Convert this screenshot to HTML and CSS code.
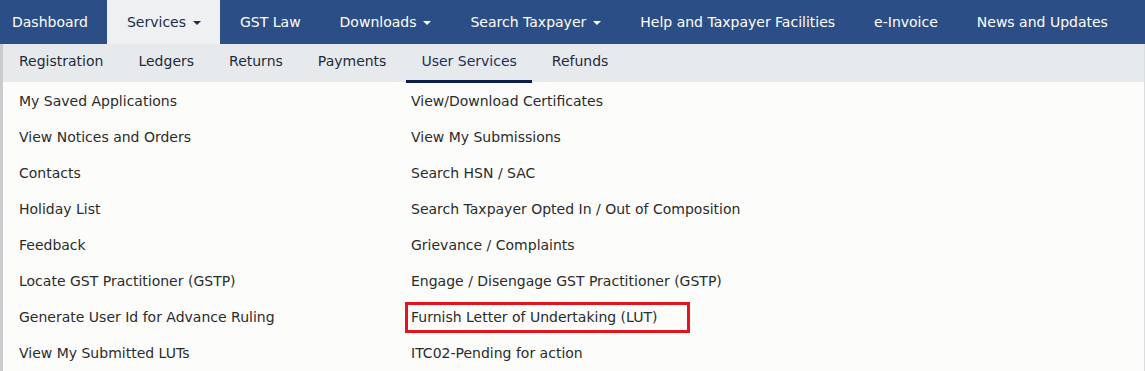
FILE: index.html
```html
<!DOCTYPE html>
<html lang="en">
<head>
    <meta charset="UTF-8">
    <meta name="viewport" content="width=device-width, initial-scale=1.0">
    <title>Services - User Services</title>
    <link rel="stylesheet" href="styles.css">
</head>
<body>

    <nav class="topnav">
        <a class="topnav-item first" href="#">Dashboard</a>
        <a class="topnav-item active" href="#">Services <span class="caret"></span></a>
        <a class="topnav-item" href="#">GST Law</a>
        <a class="topnav-item" href="#">Downloads <span class="caret"></span></a>
        <a class="topnav-item" href="#">Search Taxpayer <span class="caret"></span></a>
        <a class="topnav-item" href="#">Help and Taxpayer Facilities</a>
        <a class="topnav-item" href="#">e-Invoice</a>
        <a class="topnav-item" href="#">News and Updates</a>
    </nav>

    <div class="panel">
        <nav class="subnav">
            <a class="subnav-item" href="#">Registration</a>
            <a class="subnav-item" href="#">Ledgers</a>
            <a class="subnav-item" href="#">Returns</a>
            <a class="subnav-item" href="#">Payments</a>
            <a class="subnav-item current" href="#">User Services</a>
            <a class="subnav-item" href="#">Refunds</a>
        </nav>

        <ul class="menu">
            <li><a href="#">My Saved Applications</a></li>
            <li><a href="#">View/Download Certificates</a></li>
            <li><a href="#">View Notices and Orders</a></li>
            <li><a href="#">View My Submissions</a></li>
            <li><a href="#">Contacts</a></li>
            <li><a href="#">Search HSN / SAC</a></li>
            <li><a href="#">Holiday List</a></li>
            <li><a href="#">Search Taxpayer Opted In / Out of Composition</a></li>
            <li><a href="#">Feedback</a></li>
            <li><a href="#">Grievance / Complaints</a></li>
            <li><a href="#">Locate GST Practitioner (GSTP)</a></li>
            <li><a href="#">Engage / Disengage GST Practitioner (GSTP)</a></li>
            <li><a href="#">Generate User Id for Advance Ruling</a></li>
            <li><a class="highlight" href="#">Furnish Letter of Undertaking (LUT)</a></li>
            <li><a href="#">View My Submitted LUTs</a></li>
            <li><a href="#">ITC02-Pending for action</a></li>
        </ul>
    </div>

</body>
</html>
```

FILE: styles.css
```css
body {
    margin: 0;
    padding: 0;
    font-family: 'DejaVu Sans', Verdana, sans-serif;
    font-size: 14px;
    background-color: #fcfcfb;
    overflow: hidden;
}
a {
    text-decoration: none;
}

/* top bar */
.topnav {
    display: flex;
    height: 44px;
    background-color: #2c4e86;
}
.topnav-item {
    display: flex;
    align-items: center;
    gap: 7px;
    padding: 0 19px 0 20px;
    color: #ffffff;
    white-space: nowrap;
}
.topnav-item.first {
    padding-left: 12px;
}
.topnav-item.active {
    background-color: #eef0f2;
    color: #1d2c4c;
}
.caret {
    width: 0;
    height: 0;
    border-left: 4px solid transparent;
    border-right: 4px solid transparent;
    border-top: 4px solid currentColor;
    margin-top: 2px;
}

/* dropdown panel */
.panel {
    border-left: 3px solid #c9cbcd;
    border-right: 1px solid #dcdcdc;
    min-height: 330px;
}
.subnav {
    display: flex;
    height: 38px;
    background-color: #e7eaed;
    padding-left: 1px;
}
.subnav-item {
    display: flex;
    align-items: center;
    padding: 0 15px 2px;
    margin-right: 5px;
    color: #1e2a38;
    border-bottom: 3px solid transparent;
    margin-bottom: -1px;
}
.subnav-item.current {
    color: #1c2f5c;
    border-bottom-color: #0e1f47;
}

.menu {
    list-style: none;
    margin: 0;
    padding: 1px 0 0 16px;
    display: grid;
    grid-template-columns: 392px 1fr;
}
.menu li {
    height: 36px;
    display: flex;
    align-items: center;
}
.menu a {
    color: #2b2b2b;
}
.menu a.highlight {
    display: inline-block;
    line-height: 19px;
    padding: 3px 30px 3px 3px;
    margin-left: -6px;
    border: 3px solid #e3141b;
}
```
